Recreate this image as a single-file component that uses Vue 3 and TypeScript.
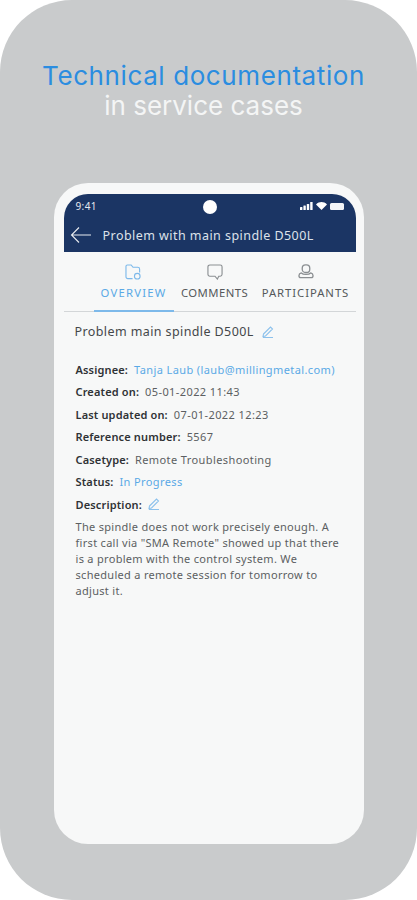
<script setup lang="ts">
  const tabs = [
    { label: 'OVERVIEW', icon: 'folder', active: true },
    { label: 'COMMENTS', icon: 'comment', active: false },
    { label: 'PARTICIPANTS', icon: 'people', active: false },
  ]

  const description =
    'The spindle does not work precisely enough. A first call via "SMA Remote" showed up that there is a problem with the control system. We scheduled a remote session for tomorrow to adjust it.'
</script>

<template>
  <main class="panel">
    <h1 class="headline">
      <span class="headline__blue">Technical documentation</span>
      <span class="headline__white">in service cases</span>
    </h1>

    <section class="phone">
      <header class="appbar">
        <div class="status">
          <span class="status__time">9:41</span>
          <span class="status__camera"></span>
          <span class="status__icons">
            <svg width="13" height="8" viewBox="0 0 13 8" fill="#fff">
              <rect x="0" y="5" width="2.4" height="3" rx="0.5" />
              <rect x="3.4" y="3.6" width="2.4" height="4.4" rx="0.5" />
              <rect x="6.8" y="2" width="2.4" height="6" rx="0.5" />
              <rect x="10.2" y="0" width="2.4" height="8" rx="0.5" />
            </svg>
            <svg width="11" height="8" viewBox="0 0 11 8" fill="#fff">
              <path d="M5.5 8 0 2.4C3.2-.7 7.8-.7 11 2.4Z" />
            </svg>
            <span class="status__battery"></span>
          </span>
        </div>
        <div class="appbar__row">
          <svg class="appbar__back" width="21" height="18" viewBox="0 0 21 18" fill="none" stroke="#e8ebf0" stroke-width="1.1">
            <path d="M21 9H1.500M9 1.500 1.500 9 9 16.500" />
          </svg>
          <span class="appbar__title">Problem with main spindle D500L</span>
        </div>
      </header>

      <nav class="tabs">
        <div v-for="tab in tabs" :key="tab.label" class="tab" :class="{ 'tab--active': tab.active }">
          <svg v-if="tab.icon === 'folder'" width="17" height="16" viewBox="0 0 18 17" fill="none" stroke="currentColor" stroke-width="1.2">
            <path d="M8 15.500H3a2 2 0 0 1-2-2V2.500a1.500 1.500 0 0 1 1.500-1.500h4L8.500 3.500h5a2 2 0 0 1 2 2V9" />
            <circle cx="13" cy="13" r="3" />
          </svg>
          <svg v-else-if="tab.icon === 'comment'" width="16" height="16" viewBox="0 0 17 17" fill="none" stroke="currentColor" stroke-width="1.2">
            <path d="M3 1h11a2 2 0 0 1 2 2v8a2 2 0 0 1-2 2h-1.500l-1.500 3-2.500-3H3a2 2 0 0 1-2-2V3a2 2 0 0 1 2-2Z" />
          </svg>
          <svg v-else width="16" height="16" viewBox="0 0 17 17" fill="none" stroke="currentColor" stroke-width="1.400">
            <rect x="4.500" y="1" width="8" height="8" rx="3.500" />
            <path d="M3.500 9.500c-1.500.5-2.500 1.500-2.500 3 0 1 .7 2 2 2h11c1.300 0 2-1 2-2 0-1.500-1-2.500-2.500-3-1 1-3 1.500-5 1.500s-4-.5-5-1.500Z" />
          </svg>
          <span class="tab__label">{{ tab.label }}</span>
        </div>
      </nav>

      <article class="details">
        <h2 class="details__title">
          Problem main spindle D500L
          <svg class="pen" width="12" height="12" viewBox="0 0 12 12" fill="none" stroke="#8cc1ec" stroke-width="1.100">
            <path d="M1.500 8 8.500 1l2 2-7 7-2.500.5ZM1 11.500h10" />
          </svg>
        </h2>

        <dl class="fields">
          <div class="field">
            <dt>Assignee:</dt>
            <dd class="link">Tanja Laub (laub@millingmetal.com)</dd>
          </div>
          <div class="field">
            <dt>Created on:</dt>
            <dd>05-01-2022 11:43</dd>
          </div>
          <div class="field">
            <dt>Last updated on:</dt>
            <dd>07-01-2022 12:23</dd>
          </div>
          <div class="field">
            <dt>Reference number:</dt>
            <dd>5567</dd>
          </div>
          <div class="field">
            <dt>Casetype:</dt>
            <dd>Remote Troubleshooting</dd>
          </div>
          <div class="field">
            <dt>Status:</dt>
            <dd class="link">In Progress</dd>
          </div>
          <div class="field">
            <dt>Description:</dt>
            <dd>
              <svg class="pen" width="12" height="12" viewBox="0 0 12 12" fill="none" stroke="#8cc1ec" stroke-width="1.100">
                <path d="M1.500 8 8.500 1l2 2-7 7-2.500.5ZM1 11.500h10" />
              </svg>
            </dd>
          </div>
        </dl>

        <p class="description">{{ description }}</p>
      </article>
    </section>
  </main>
</template>

<style>
  html,
  body {
    margin: 0;
    background: #fff;
  }
</style>

<style scoped>
  .panel {
    box-sizing: border-box;
    width: 417px;
    height: 900px;
    padding-top: 61px;
    background: #c9cbcc;
    border-radius: 72px;
    display: flex;
    flex-direction: column;
    align-items: center;
    font-family: 'Noto Sans', sans-serif;
    overflow: hidden;
  }

  .headline {
    margin: 0 10px 0 0;
    display: flex;
    flex-direction: column;
    align-items: center;
    font-family: Inter, sans-serif;
    font-size: 26px;
    font-weight: 400;
    line-height: 30px;
  }

  .headline__blue {
    color: #2b8de0;
    letter-spacing: 0.6px;
  }

  .headline__white {
    color: #f4f5f5;
  }

  .phone {
    box-sizing: border-box;
    width: 310px;
    height: 661px;
    margin-top: 62px;
    padding: 11px 8px 0 10px;
    background: #f7f8f8;
    border-radius: 34px;
  }

  .appbar {
    height: 58px;
    background: #1b3564;
    border-radius: 24px 24px 0 0;
    color: #fff;
  }

  .status {
    position: relative;
    display: flex;
    justify-content: space-between;
    align-items: center;
    height: 24px;
    padding: 0 12px 0 12px;
  }

  .status__time {
    font-size: 10px;
    letter-spacing: 0.4px;
    color: #e6eaf0;
  }

  .status__camera {
    position: absolute;
    left: 139px;
    top: 6px;
    width: 14px;
    height: 14px;
    border-radius: 50%;
    background: #fff;
  }

  .status__icons {
    display: flex;
    align-items: center;
    gap: 3px;
  }

  .status__battery {
    width: 14px;
    height: 7px;
    border-radius: 1.500px;
    background: #f2f4f7;
  }

  .appbar__row {
    display: flex;
    align-items: center;
    gap: 12px;
    padding-left: 6px;
    height: 34px;
  }

  .appbar__title {
    font-size: 12.500px;
    letter-spacing: 0.45px;
    color: #dde2ea;
    white-space: nowrap;
  }

  .tabs {
    display: flex;
    height: 59px;
    padding-left: 30px;
    border-bottom: 1px solid #d3d6d8;
  }

  .tab {
    display: flex;
    flex-direction: column;
    align-items: center;
    gap: 5px;
    box-sizing: border-box;
    padding-top: 12px;
    height: 60px;
    color: #8b8f92;
  }

  .tab:nth-child(1) {
    width: 80px;
  }

  .tab:nth-child(2) {
    width: 82px;
  }

  .tab:nth-child(3) {
    width: 100px;
  }

  .tab--active {
    color: #7db9ea;
    border-bottom: 2px solid #7db9ea;
  }

  .tab__label {
    font-size: 11.300px;
    letter-spacing: 0.45px;
    color: #55585b;
    white-space: nowrap;
  }

  .tab:nth-child(3) .tab__label {
    letter-spacing: 0.95px;
  }

  .tab--active .tab__label {
    color: #5aa9e6;
    letter-spacing: 1.200px;
  }

  .details {
    padding: 11px 10px 0 11px;
  }

  .details__title {
    margin: 0;
    font-size: 12.500px;
    font-weight: 400;
    letter-spacing: 0.4px;
    line-height: 18px;
    color: #44474a;
    display: flex;
    align-items: center;
    gap: 8px;
  }

  .fields {
    margin: 17px 0 0 1px;
  }

  .field {
    display: flex;
    align-items: center;
    gap: 6px;
    height: 22.500px;
    font-size: 11px;
    letter-spacing: 0.4px;
    color: #5c5f62;
  }

  .field dt {
    font-weight: 600;
    letter-spacing: 0.15px;
    color: #2f3235;
  }

  .field dd {
    margin: 0;
    display: flex;
  }

  .field .link {
    color: #5aa9e6;
  }

  .description {
    margin: 3px 0 0 1px;
    font-size: 11px;
    letter-spacing: 0.3px;
    line-height: 16px;
    color: #5c5f62;
    width: 267px;
  }
</style>
